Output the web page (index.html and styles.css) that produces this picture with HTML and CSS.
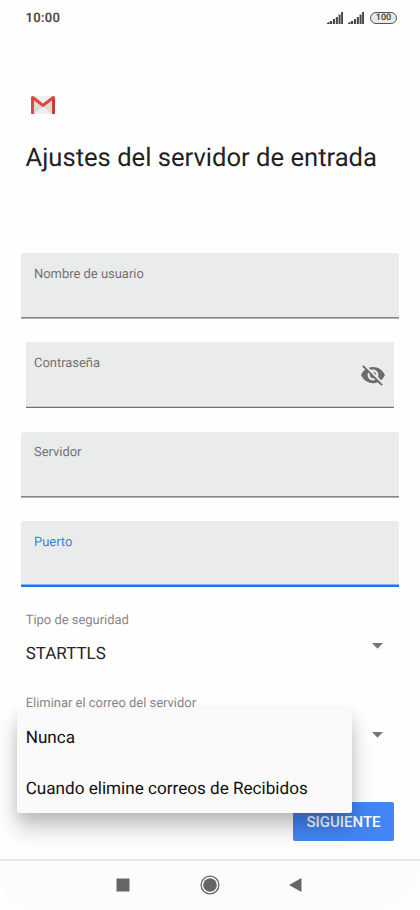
FILE: index.html
```html
<!DOCTYPE html>
<html lang="es">
<head>
<meta charset="utf-8">
<title>Ajustes del servidor de entrada</title>
<link rel="stylesheet" href="styles.css">
</head>
<body>
<div class="phone">
  <header class="status">
    <span class="clock">10:00</span>
    <div class="indicators">
      <svg class="signal" width="16" height="12" viewBox="0 0 16 12"><path d="M0 12v-1l2.6-1.2V12zM3 9h2.1v3H3zM5.9 7h2.1v5H5.9zM8.8 5h2.1v7H8.8zM11.6 2.5h2V12h-2zM14.1 0H16v12h-1.9z"/></svg>
      <svg class="signal" width="16" height="12" viewBox="0 0 16 12"><path d="M0 12v-1l2.6-1.2V12zM3 9h2.1v3H3zM5.9 7h2.1v5H5.9zM8.8 5h2.1v7H8.8zM11.6 2.5h2V12h-2zM14.1 0H16v12h-1.9z"/></svg>
      <span class="battery">100</span>
    </div>
  </header>
  <main class="content">
    <svg class="logo" width="24" height="18" viewBox="0 0 24 18">
      <path fill="#e9e9e9" d="M1 0h22v18H1z"/>
      <path fill="#dadada" d="M3 5l9 6 9-6v13H3z"/>
      <path fill="#eee" d="M3 18l9-8 9 8z"/>
      <path fill="#f0f0f0" d="M2 0h20L12 8z"/>
      <path fill="#d94b40" d="M0 1.7C0 .6.8 0 1.8 0c.5 0 .9.2 1.3.5L12 7.6 20.9.5c.4-.3.8-.5 1.3-.5 1 0 1.8.6 1.8 1.7V17c0 .6-.4 1-1 1h-2V4.4l-9 6.8-9-6.8V18H1c-.6 0-1-.4-1-1z"/>
      <path fill="#c63a31" d="M21.6 4l2.4-2v15c0 .6-.4 1-1 1h-1.4z"/>
    </svg>
    <h1 class="title">Ajustes del servidor de entrada</h1>
    <form class="fields">
      <div class="field"><label class="label">Nombre de usuario</label></div>
      <div class="field field-password"><label class="label">Contraseña</label>
        <svg class="eye" width="26" height="26" viewBox="0 0 24 24"><path d="M12 7c2.76 0 5 2.24 5 5 0 .65-.13 1.26-.36 1.83l2.92 2.92c1.51-1.26 2.7-2.89 3.43-4.75-1.73-4.39-6-7.5-11-7.5-1.4 0-2.74.25-3.98.7l2.16 2.16C10.74 7.13 11.35 7 12 7zM2 4.27l2.28 2.28.46.46C3.08 8.3 1.78 10.02 1 12c1.73 4.39 6 7.5 11 7.5 1.55 0 3.03-.3 4.38-.84l.42.42L19.73 22 21 20.73 3.27 3 2 4.27zM7.53 9.8l1.55 1.55c-.05.21-.08.43-.08.65 0 1.66 1.34 3 3 3 .22 0 .44-.03.65-.08l1.55 1.55c-.67.33-1.41.53-2.2.53-2.76 0-5-2.24-5-5 0-.79.2-1.53.53-2.2zm4.31-.78l3.15 3.15.02-.16c0-1.66-1.34-3-3-3l-.17.01z"/></svg>
      </div>
      <div class="field"><label class="label">Servidor</label></div>
      <div class="field field-active"><label class="label">Puerto</label></div>
    </form>
    <section class="select">
      <div class="select-label">Tipo de seguridad</div>
      <div class="select-row"><span class="value">STARTTLS</span><svg class="caret" width="11" height="6" viewBox="0 0 11 6"><path d="M0 0h11L5.5 5.7z"/></svg></div>
    </section>
    <section class="select select-delete">
      <div class="select-label">Eliminar el correo del servidor</div>
      <div class="select-row"><svg class="caret" width="11" height="6" viewBox="0 0 11 6"><path d="M0 0h11L5.5 5.7z"/></svg></div>
    </section>
    <button class="next" type="button">SIGUIENTE</button>
    <div class="overlay">
      <div class="menu">
        <div class="option">Nunca</div>
        <div class="option">Cuando elimine correos de Recibidos</div>
      </div>
    </div>
  </main>
  <nav class="navbar">
    <svg width="14" height="14" viewBox="0 0 14 14"><path d="M.5.5h13v13H.5z"/></svg>
    <svg width="20" height="20" viewBox="0 0 20 20"><circle cx="10" cy="10" r="8.9" fill="none" stroke="#666" stroke-width="1.3"/><circle cx="10" cy="10" r="6.8"/></svg>
    <svg width="13" height="14" viewBox="0 0 13 14"><path d="M0 7L12.5 0v14z"/></svg>
  </nav>
</div>
</body>
</html>
```

FILE: styles.css
```css
* { box-sizing: border-box; }
body { margin: 0; font-family: Roboto, "Liberation Sans", sans-serif; background: #fefefe; text-rendering: geometricPrecision; }
.phone { width: 420px; height: 910px; display: flex; flex-direction: column; overflow: hidden; background: #fefefe; }
.status { height: 36px; flex: none; display: flex; justify-content: space-between; align-items: center; padding: 0 23px 0 25.5px; }
.clock { margin-top: 1px; font-size: 13px; font-weight: 600; color: #484848; letter-spacing: 0.3px; }
.indicators { display: flex; align-items: center; gap: 5px; }
.signal { fill: #484848; }
.battery { width: 27px; height: 12px; margin-left: 1px; border: 1px solid #555; border-radius: 6px; background: #e8e8e8; font-size: 9px; font-weight: 600; line-height: 11px; text-align: center; color: #484848; }
.content { position: relative; height: 823px; flex: none; display: flex; flex-direction: column; }
.logo { margin: 60px 0 0 31px; flex: none; }
.title { margin: 28px 0 0 25.5px; height: 32px; font-size: 25.6px; line-height: 32px; font-weight: 400; color: #222; white-space: nowrap; }
.fields { margin: 79px 21.4px 0; display: flex; flex-direction: column; gap: 23.4px; }
.field { height: 66px; padding: 13.5px 0 0 12.6px; background: #eaeceb; border-bottom: 1px solid #b0b2b1; box-shadow: inset 0 -1px #858787; border-radius: 4px 4px 0 0; }
.field-password { display: flex; justify-content: space-between; margin: 0 4.3px; padding: 13.5px 8.5px 0 8.3px; border-radius: 0; border-bottom-color: #707272; box-shadow: inset 0 -1px #cccecd; }
.field-active { border-bottom: 2px solid #1f75e8; box-shadow: inset 0 -1px #86b2ed; }
.label { display: block; font-size: 12.95px; line-height: 16px; color: #707375; }
.field-active .label { color: #3b7fe6; }
.eye { margin-top: 6px; fill: #6c6c6c; }
.select { margin: 26px 26px 0 25.7px; height: 57px; }
.select-label { font-size: 12.95px; line-height: 16px; color: #888; white-space: nowrap; }
.select-row { display: flex; justify-content: space-between; height: 32px; padding: 7.5px 11.5px 0 0; margin-top: 4px; }
.value { font-size: 17px; line-height: 26px; color: #252525; }
.caret { margin: 2.5px 0 0 auto; fill: #757575; }
.select-delete .caret { margin-top: 8.5px; }
.next { align-self: flex-end; margin: 48.5px 26px 0 0; width: 101px; height: 39px; padding: 1px 0 0; border: 0; border-radius: 2px; background: #4286f5; color: #fff; font: 500 15px/38px Roboto, sans-serif; }
.overlay { position: absolute; inset: 630px 0 12px; overflow: hidden; }
.menu { width: 334.5px; height: 104px; margin: 43px 0 0 17px; padding: 4px 9px 0 8.7px; border-radius: 2px; background: #fafafa; box-shadow: 0 16px 22px rgba(0,0,0,.2), 0 5px 14px rgba(0,0,0,.11); }
.option { height: 51.3px; line-height: 51.3px; font-size: 17.13px; color: #111; white-space: nowrap; }
.navbar { height: 51px; flex: none; display: flex; align-items: center; justify-content: space-between; padding: 0 118px 2px 116px; border-top: 2px solid #e6e6e6; background: #fcfcfc; border-radius: 0 0 34px 34px; fill: #666; }
```
